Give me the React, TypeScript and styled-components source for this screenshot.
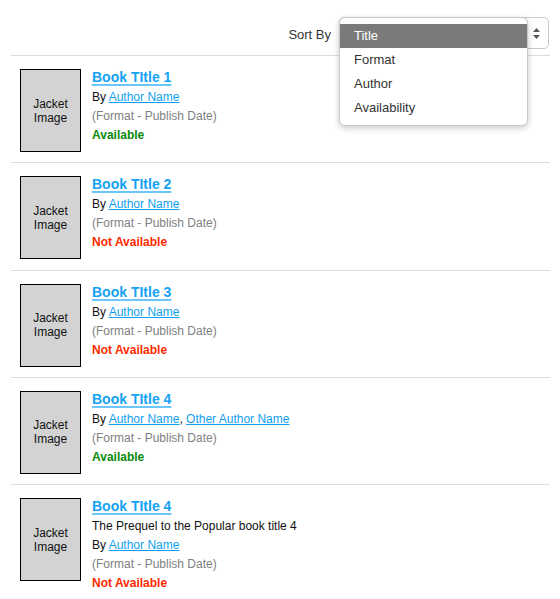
import React from "react";
import styled, { createGlobalStyle } from "styled-components";

const Global = createGlobalStyle`
  html, body { margin: 0; padding: 0; background: #fff; }
  body { margin: 8px; font-family: "Liberation Sans", Arial, Helvetica, sans-serif; color: #111; }
`;

const Page = styled.div`
  padding: 0 2px 0 3px;
`;

const Toolbar = styled.div`
  display: flex;
  justify-content: flex-end;
  align-items: center;
  gap: 8px;
  padding: 9px 1px 6px 0;
  border-bottom: 1px solid #dcdcdc;
`;

const SortLabel = styled.span`
  font-size: 13px;
  color: #333;
  margin-top: 3px;
`;

const SelectWrap = styled.div`
  position: relative;
  width: 210px;
  height: 32px;
`;

const SelectBox = styled.div`
  box-sizing: border-box;
  width: 100%;
  height: 100%;
  border: 1px solid #c9c9c9;
  border-radius: 5px;
  background: #fff;
  display: flex;
  justify-content: flex-end;
  align-items: center;
  padding-right: 7px;
`;

const Menu = styled.ul`
  position: absolute;
  top: 0;
  left: 0;
  box-sizing: border-box;
  width: 189px;
  margin: 0;
  padding: 6px 0 5px;
  list-style: none;
  background: #fff;
  border: 1px solid #c8c8c8;
  border-radius: 6px;
  box-shadow: 0 2px 6px rgba(0, 0, 0, 0.22);
  z-index: 2;
`;

const MenuItem = styled.li<{ $active?: boolean }>`
  height: 24px;
  line-height: 24px;
  padding-left: 14px;
  font-size: 13px;
  color: ${(p) => (p.$active ? "#fff" : "#333")};
  background: ${(p) => (p.$active ? "#7a7a7a" : "transparent")};
`;

const List = styled.div`
  display: flex;
  flex-direction: column;
`;

const Row = styled.div`
  display: flex;
  align-items: flex-start;
  gap: 11px;
  padding: 13px 0 10.25px 9px;
  border-bottom: 1px solid #dcdcdc;
`;

const Jacket = styled.div`
  box-sizing: border-box;
  flex: 0 0 61px;
  width: 61px;
  height: 83px;
  border: 1px solid #000;
  background: #d3d3d3;
  display: flex;
  align-items: center;
  justify-content: center;
  text-align: center;
  font-size: 12px;
  line-height: 14px;
  color: #111;
`;

const Info = styled.div`
  display: flex;
  flex-direction: column;
`;

const Title = styled.a`
  font-size: 14px;
  font-weight: bold;
  line-height: 16px;
  margin-bottom: 3px;
  color: #15a2f3;
  text-decoration: underline;
  text-decoration-thickness: 2px;
  text-underline-offset: 2px;
  text-decoration-color: #6cc6f7;
  align-self: flex-start;
`;

const Line = styled.div<{ $tone?: "gray" | "ok" | "no" }>`
  font-size: 12px;
  line-height: 19px;
  color: ${(p) =>
    p.$tone === "gray" ? "#7f7f7f" : p.$tone === "ok" ? "#0a8a0a" : p.$tone === "no" ? "#ff2a00" : "#111"};
  font-weight: ${(p) => (p.$tone === "ok" || p.$tone === "no" ? "bold" : "normal")};
`;

const Link = styled.a`
  color: #119ff0;
  text-decoration: underline;
`;

const Arrows = () => (
  <svg width="9" height="13" viewBox="0 0 9 13">
    <path d="M4.5 1 L8 5 L1 5 Z" fill="#555" />
    <path d="M4.5 12 L8 8 L1 8 Z" fill="#555" />
  </svg>
);

type Book = {
  title: string;
  subtitle?: string;
  authors: string[];
  available: boolean;
};

const books: Book[] = [
  { title: "Book TItle 1", authors: ["Author Name"], available: true },
  { title: "Book TItle 2", authors: ["Author Name"], available: false },
  { title: "Book TItle 3", authors: ["Author Name"], available: false },
  { title: "Book TItle 4", authors: ["Author Name", "Other Author Name"], available: true },
  {
    title: "Book TItle 4",
    subtitle: "The Prequel to the Popular book title 4",
    authors: ["Author Name"],
    available: false,
  },
];

export default function App() {
  return (
    <>
      <Global />
      <Page>
        <Toolbar>
          <SortLabel>Sort By</SortLabel>
          <SelectWrap>
            <SelectBox>
              <Arrows />
            </SelectBox>
            <Menu>
              <MenuItem $active>Title</MenuItem>
              <MenuItem>Format</MenuItem>
              <MenuItem>Author</MenuItem>
              <MenuItem>Availability</MenuItem>
            </Menu>
          </SelectWrap>
        </Toolbar>
        <List>
          {books.map((b, i) => (
            <Row key={i}>
              <Jacket>
                Jacket
                <br />
                Image
              </Jacket>
              <Info>
                <Title href="#">{b.title}</Title>
                {b.subtitle && <Line>{b.subtitle}</Line>}
                <Line>
                  By{" "}
                  {b.authors.map((a, j) => (
                    <React.Fragment key={j}>
                      {j > 0 && ", "}
                      <Link href="#">{a}</Link>
                    </React.Fragment>
                  ))}
                </Line>
                <Line $tone="gray">(Format - Publish Date)</Line>
                <Line $tone={b.available ? "ok" : "no"}>
                  {b.available ? "Available" : "Not Available"}
                </Line>
              </Info>
            </Row>
          ))}
        </List>
      </Page>
    </>
  );
}
